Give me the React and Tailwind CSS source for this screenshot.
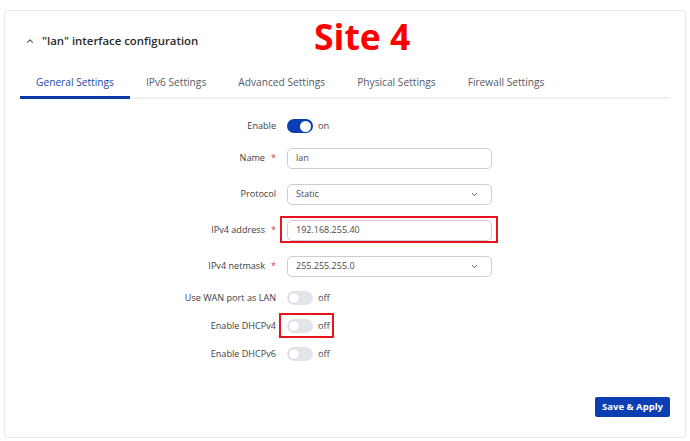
import { ChevronUp, ChevronDown } from 'lucide-react';

const TABS = ['General Settings', 'IPv6 Settings', 'Advanced Settings', 'Physical Settings', 'Firewall Settings'];

function Toggle({ on }) {
  return (
    <div className="flex items-center gap-[5px]">
      <div
        className={
          on
            ? 'w-[26px] h-[14px] rounded-full bg-[#0b3db3] flex items-center justify-end pr-[2px]'
            : 'w-[26px] h-[14px] rounded-full bg-[#e3e5ea] flex items-center justify-start pl-[1px]'
        }
      >
        <div className={on ? 'w-[11px] h-[11px] rounded-full bg-white' : 'w-[12px] h-[12px] rounded-full bg-white border border-[#d6d9df]'} />
      </div>
      <span className="text-[9.3px] text-[#4a4a4a]">{on ? 'on' : 'off'}</span>
    </div>
  );
}

function Row({ label, required, h, children }) {
  return (
    <div className={`flex items-center ${h}`}>
      <div className="w-[282px] pr-[11px] text-right text-[9.1px] text-[#3d3d3d]">
        {label}
        {required && <span className="ml-[6px] text-[#e0383b]">*</span>}
      </div>
      {children}
    </div>
  );
}

function Input({ value, select }) {
  return (
    <div className="w-[205px] h-[21px] rounded-[5px] border border-[#c9cdd5] bg-white flex items-center justify-between pl-[8px] pr-[12px] text-[9px] text-[#4a4a4a]">
      <span>{value}</span>
      {select && <ChevronDown size={9} strokeWidth={2.5} className="text-[#555]" />}
    </div>
  );
}

export default function App() {
  return (
    <div className="w-[690px] h-[441px] bg-white pt-[10px] px-[4px] font-['Open_Sans',sans-serif]">
      <div className="relative h-[428px] border border-[#e6e8ee] rounded-[4px] flex flex-col">
        {/* Header */}
        <div className="h-[59px] flex items-center gap-[7px] pl-[20px]">
          <ChevronUp size={10} strokeWidth={2.5} className="text-[#333]" />
          <span className="text-[11.4px] font-semibold text-[#2b2b2b]">"lan" interface configuration</span>
        </div>
        <div className="absolute left-[309px] top-[8px] text-[35.5px] font-bold text-[#ff0000] leading-none">Site 4</div>

        {/* Tabs */}
        <div className="mx-[15px] flex border-b-2 border-[#eef0f4] h-[29px]">
          {TABS.map((t, i) => (
            <div
              key={t}
              className={
                i === 0
                  ? 'px-4 pt-[5px] -mb-[2px] border-b-[3px] border-[#0b3aa8] text-[10.2px] text-[#1b4ba6]'
                  : 'px-4 pt-[5px] text-[10.2px] text-[#555b66]'
              }
            >
              {t}
            </div>
          ))}
        </div>

        {/* Form */}
        <div className="mt-[13px] flex flex-col">
          <Row label="Enable" h="h-[28px]"><Toggle on /></Row>
          <Row label="Name" required h="h-[36px]"><Input value="lan" /></Row>
          <Row label="Protocol" h="h-[36px]"><Input value="Static" select /></Row>
          <Row label="IPv4 address" required h="h-[36px]">
            <div className="relative">
              <Input value="192.168.255.40" />
              <div className="absolute -left-[7px] -right-[6px] -top-[4px] -bottom-[2px] border-2 border-[#e8141b]" />
            </div>
          </Row>
          <Row label="IPv4 netmask" required h="h-[36px]"><Input value="255.255.255.0" select /></Row>
          <Row label="Use WAN port as LAN" h="h-[28px]"><Toggle /></Row>
          <Row label="Enable DHCPv4" h="h-[28px]">
            <div className="relative">
              <Toggle />
              <div className="absolute -left-[8px] -right-[4px] -top-[6px] -bottom-[5px] border-2 border-[#e8141b]" />
            </div>
          </Row>
          <Row label="Enable DHCPv6" h="h-[28px]"><Toggle /></Row>
        </div>

        <div className="flex justify-end pr-[15px] mt-[29px]">
          <button className="w-[75px] h-[20px] rounded-[2px] bg-[#0b3db3] text-white text-[9.5px] font-bold">Save &amp; Apply</button>
        </div>
      </div>
    </div>
  );
}
